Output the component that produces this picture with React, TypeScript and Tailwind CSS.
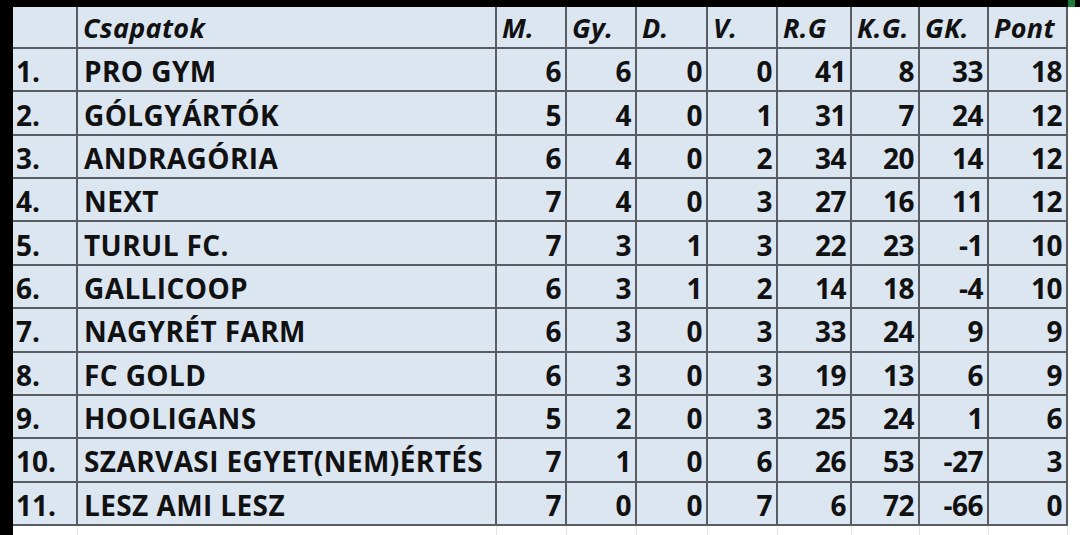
import React from "react";

const cols = "grid-cols-[65px_419px_70px_70px_71px_70px_74px_68px_69px_79px]";

const headers = ["", "Csapatok", "M.", "Gy.", "D.", "V.", "R.G", "K.G.", "GK.", "Pont"];

const rows: [string, string, number[]][] = [
  ["1.", "PRO GYM", [6, 6, 0, 0, 41, 8, 33, 18]],
  ["2.", "GÓLGYÁRTÓK", [5, 4, 0, 1, 31, 7, 24, 12]],
  ["3.", "ANDRAGÓRIA", [6, 4, 0, 2, 34, 20, 14, 12]],
  ["4.", "NEXT", [7, 4, 0, 3, 27, 16, 11, 12]],
  ["5.", "TURUL FC.", [7, 3, 1, 3, 22, 23, -1, 10]],
  ["6.", "GALLICOOP", [6, 3, 1, 2, 14, 18, -4, 10]],
  ["7.", "NAGYRÉT FARM", [6, 3, 0, 3, 33, 24, 9, 9]],
  ["8.", "FC GOLD", [6, 3, 0, 3, 19, 13, 6, 9]],
  ["9.", "HOOLIGANS", [5, 2, 0, 3, 25, 24, 1, 6]],
  ["10.", "SZARVASI EGYET(NEM)ÉRTÉS", [7, 1, 0, 6, 26, 53, -27, 3]],
  ["11.", "LESZ AMI LESZ", [7, 0, 0, 7, 6, 72, -66, 0]],
];

const cell = "border-r-2 border-b-2 border-[#595d63] flex items-center pt-[3px] whitespace-nowrap";

export default function App() {
  return (
    <div className="w-[1080px] h-[535px] bg-white flex flex-col overflow-hidden font-['Open_Sans','Liberation_Sans',sans-serif] font-bold text-[28px] leading-none text-[#111]">
      {/* top dark bar */}
      <div className="h-[7px] bg-black shrink-0 flex justify-end">
        <div className="w-[7px] mr-[5px] bg-[#1f7a3a]" />
      </div>

      <div className="flex flex-1">
        <div className="w-[13px] bg-black shrink-0" />

        <div className="flex flex-col">
          {/* header */}
          <div className={`grid ${cols} h-[42px] bg-[#dce6f1] italic text-[27px] tracking-[0.3px]`}>
            {headers.map((h, i) => (
              <div key={i} className={`${cell} justify-start pl-[5px] !pt-0`}>
                {h}
              </div>
            ))}
          </div>

          {rows.map(([rank, name, nums]) => (
            <div key={rank} className={`grid ${cols} h-[43.36px] bg-[#dce6f1]`}>
              <div className={`${cell} justify-start pl-[3px]`}>{rank}</div>
              <div className={`${cell} justify-start pl-[6px] tracking-[0.4px]`}>{name}</div>
              {nums.map((n, i) => (
                <div key={i} className={`${cell} justify-end pr-[4px] tracking-[-0.5px]`}>
                  {n}
                </div>
              ))}
            </div>
          ))}

          {/* empty sheet area below */}
          <div className={`grid ${cols} flex-1`}>
            {headers.map((_, i) => (
              <div key={i} className="border-r border-[#e4e4e4]" />
            ))}
          </div>
        </div>
      </div>
    </div>
  );
}
